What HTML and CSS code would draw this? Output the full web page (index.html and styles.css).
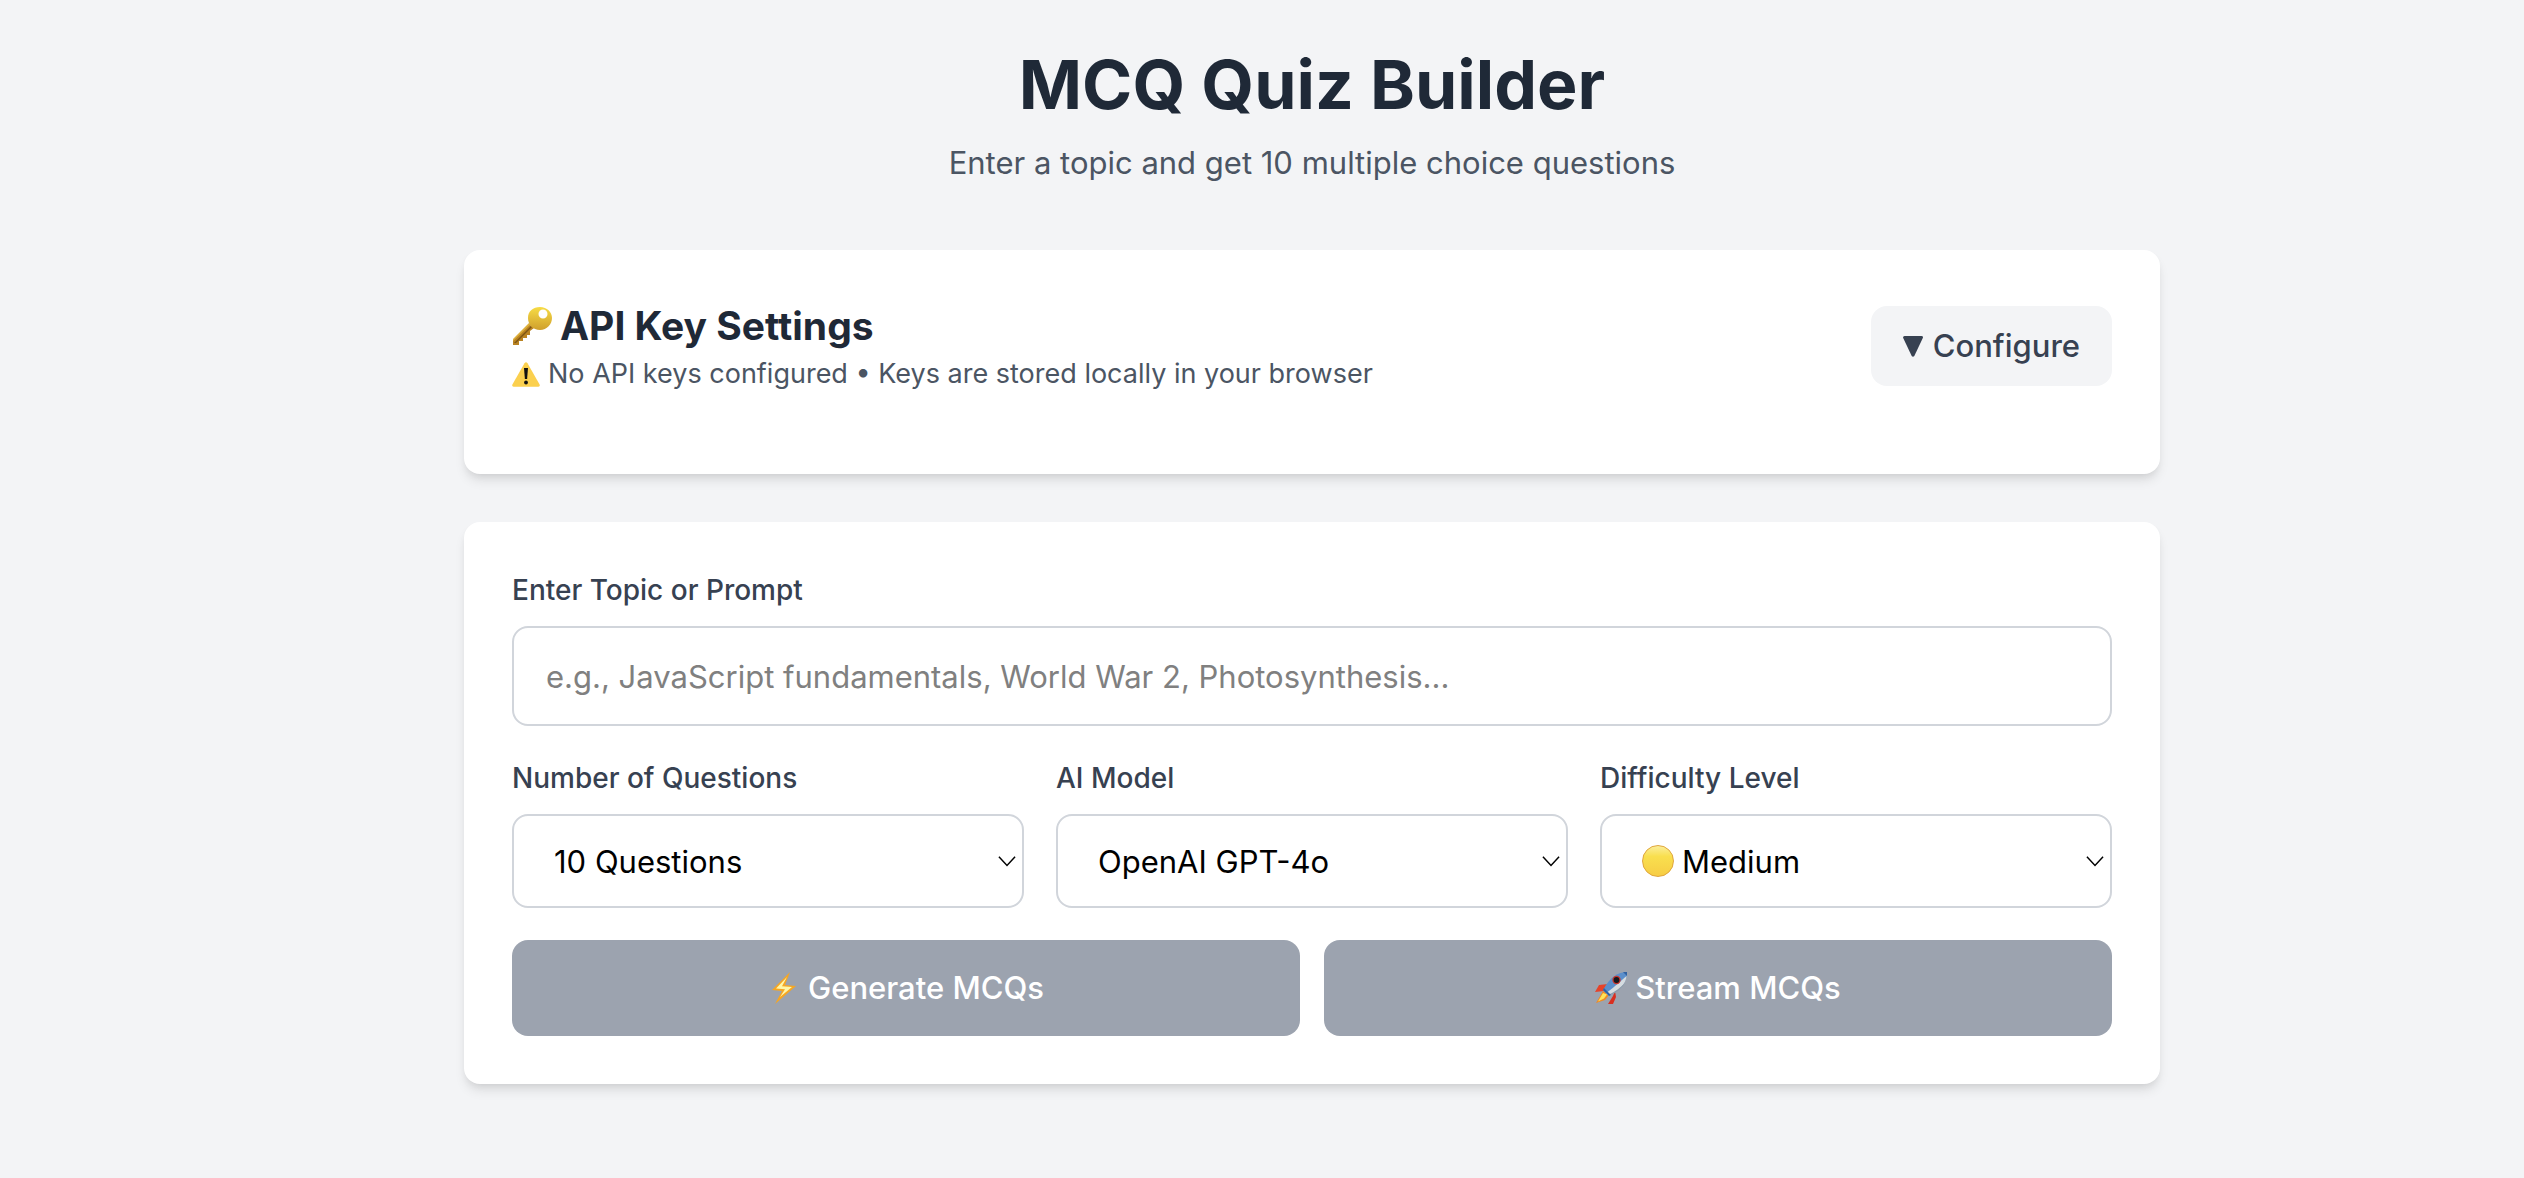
FILE: index.html
```html
<!DOCTYPE html>
<html lang="en">
<head>
    <meta charset="UTF-8">
    <meta name="viewport" content="width=device-width, initial-scale=1.0">
    <title>MCQ Quiz Builder</title>
    <link rel="stylesheet" href="styles.css">
</head>
<body>
    <main class="container">
        <header class="header">
            <h1>MCQ Quiz Builder</h1>
            <p>Enter a topic and get 10 multiple choice questions</p>
        </header>

        <section class="card settings">
            <div>
                <h2>
                    <svg class="icon-key" viewBox="0 0 40 40" aria-hidden="true">
                        <defs>
                            <linearGradient id="gold" x1="0" y1="0" x2="0" y2="1">
                                <stop offset="0" stop-color="#f7dc45"/>
                                <stop offset="1" stop-color="#cf9f2c"/>
                            </linearGradient>
                        </defs>
                        <path fill="#b98322" d="M17 18 1 34v5h6v-4h4v-3h4v-3h3v-4l4-3z"/>
                        <path fill="#dcae3a" d="M17 17 1 33v2l18-17z"/>
                        <path fill="#7d5514" d="M2 37 20 19l1 1L4 37z"/>
                        <path fill="url(#gold)" fill-rule="evenodd" d="M28 1c7 0 12 5 12 11s-5 12-12 12-12-5-12-12S21 1 28 1zm3 2.500a4.500 4.500 0 1 0 0 9 4.500 4.500 0 0 0 0-9z"/>
                    </svg>
                    API Key Settings
                </h2>
                <p>
                    <svg class="icon-warning" viewBox="0 0 28 25" aria-hidden="true">
                        <path fill="#fbd04e" d="M12.500 1.200q1.500-2 3 0L27.600 22.500q.8 2-1.200 2.300H1.600Q-.4 24.500.4 22.500z"/>
                        <path fill="#111" d="M12 6h4l-.9 11h-2.200z"/>
                        <circle cx="14" cy="20.500" r="1.900" fill="#111"/>
                    </svg>
                    No API keys configured • Keys are stored locally in your browser
                </p>
            </div>
            <button type="button" class="btn-configure">
                <svg class="icon-triangle" viewBox="0 0 20 21" aria-hidden="true">
                    <path fill="currentColor" d="M1.500 0h17q2 .2 1.300 2L11.300 20q-1.300 1.500-2.600 0L.2 2Q-.4.200 1.500 0z"/>
                </svg>
                Configure
            </button>
        </section>

        <form class="card" id="quiz-form">
            <label for="topic">Enter Topic or Prompt</label>
            <input type="text" id="topic" name="topic" placeholder="e.g., JavaScript fundamentals, World War 2, Photosynthesis...">

            <div class="options">
                <div>
                    <label for="count">Number of Questions</label>
                    <div class="select-box">
                        <select id="count" name="count">
                            <option value="5">5 Questions</option>
                            <option value="10" selected>10 Questions</option>
                            <option value="20">20 Questions</option>
                        </select>
                        <svg class="chevron" viewBox="0 0 24 15" aria-hidden="true"><path d="M1 1l11 12L23 1"/></svg>
                    </div>
                </div>
                <div>
                    <label for="model">AI Model</label>
                    <div class="select-box">
                        <select id="model" name="model">
                            <option value="gpt-4o">OpenAI GPT-4o</option>
                        </select>
                        <svg class="chevron" viewBox="0 0 24 15" aria-hidden="true"><path d="M1 1l11 12L23 1"/></svg>
                    </div>
                </div>
                <div>
                    <label for="level">Difficulty Level</label>
                    <div class="select-box">
                        <select id="level" name="level" class="with-dot">
                            <option value="easy">Easy</option>
                            <option value="medium" selected>Medium</option>
                            <option value="hard">Hard</option>
                        </select>
                        <span class="dot"></span>
                        <svg class="chevron" viewBox="0 0 24 15" aria-hidden="true"><path d="M1 1l11 12L23 1"/></svg>
                    </div>
                </div>
            </div>

            <div class="actions">
                <button type="submit" disabled>
                    <svg class="icon" viewBox="-4 0 32 32" aria-hidden="true">
                        <path fill="#f6a623" d="M18 0 0 18l10 1L3 32l21-18-11-1z"/>
                        <path fill="#fff7a8" d="M15 5 4 16.500l9 .8L8 25l12-10-10-.8z"/>
                    </svg>
                    Generate MCQs
                </button>
                <button type="button" disabled>
                    <svg class="icon" viewBox="0 0 32 32" aria-hidden="true">
                        <path fill="#e5432a" d="M13 12 4 13 0 20l9-1z"/>
                        <path fill="#d92f20" d="m20 19-2 5-5 8h5l3-7z"/>
                        <path fill="#f08a24" d="M8 19 1 31l9-3 4-5z"/>
                        <path fill="#fde35a" d="M8 21 3 29.500l6-3 3-4z"/>
                        <path fill="#5b8fcb" d="M32 0C23 0 15 5 8 18l6 6C25 19 32 10 32 0z"/>
                        <path fill="#d5dce0" d="M31.500 4C27 8 21 14 11 21l3 3C24 19 31 12 31.500 4z"/>
                        <path fill="#8a9aa8" d="M30 11C26 17 21 21 14 24l-1-1c7-3 12-7 17-12z"/>
                        <path fill="#2f62a3" d="m8 18 6 6 2-1-7-7zM28 0l4 4V0z"/>
                        <circle cx="21.500" cy="8" r="4.200" fill="#c8352c"/>
                        <circle cx="21.500" cy="8" r="2.900" fill="#15181d"/>
                    </svg>
                    Stream MCQs
                </button>
            </div>
        </form>
    </main>
</body>
</html>
```
FILE: styles.css
```css
* {
    box-sizing: border-box;
}
body {
    margin: 0;
    padding: 44px 0 48px 100px;
    background-color: #f3f4f6;
    font-family: Inter, "Liberation Sans", sans-serif;
    font-size: 31px;
    color: #1f2937;
}
h1, h2, p {
    margin: 0;
}
.container {
    max-width: 1696px;
    margin: 0 auto;
}
.header {
    text-align: center;
    margin-bottom: 64px;
}
.header h1 {
    font-size: 68px;
    line-height: 80px;
    margin-bottom: 16px;
}
.header p {
    line-height: 46px;
    color: #4b5563;
}
.card {
    display: block;
    background-color: white;
    border-radius: 16px;
    padding: 48px;
    margin-bottom: 48px;
    box-shadow: 0 8px 12px -2px rgba(0, 0, 0, 0.1), 0 4px 8px -4px rgba(0, 0, 0, 0.1);
}
.settings {
    display: flex;
    justify-content: space-between;
    align-items: center;
    padding-bottom: 80px;
}
.settings h2 {
    display: flex;
    align-items: center;
    gap: 8px;
    font-size: 39px;
    line-height: 56px;
}
.settings p {
    display: flex;
    align-items: center;
    gap: 8px;
    font-size: 27px;
    line-height: 40px;
    color: #4b5563;
}
button {
    display: flex;
    align-items: center;
    justify-content: center;
    border: none;
    border-radius: 16px;
    font-family: inherit;
    font-size: 31px;
    font-weight: 500;
    line-height: 48px;
}
.btn-configure {
    gap: 10px;
    padding: 16px 32px;
    background-color: #f3f4f6;
    color: #374151;
    cursor: pointer;
}
label {
    display: block;
    margin-bottom: 16px;
    font-size: 28px;
    font-weight: 500;
    line-height: 40px;
    color: #374151;
}
input, select {
    display: block;
    width: 100%;
    border: 2px solid #d1d5db;
    border-radius: 16px;
    background-color: white;
    font-family: inherit;
    font-size: 31px;
    color: black;
}
input {
    height: 100px;
    padding: 0 32px;
}
input::placeholder {
    color: #808080;
}
select {
    height: 94px;
    padding: 0 40px;
    appearance: none;
}
.options {
    display: grid;
    grid-template-columns: repeat(3, 1fr);
    gap: 32px;
    margin: 32px 0;
}
.select-box {
    position: relative;
}
.select-box .with-dot {
    padding-left: 80px;
}
.chevron {
    position: absolute;
    right: 8px;
    top: 42px;
    width: 18px;
    height: 11px;
    fill: none;
    stroke: black;
    stroke-width: 2;
    pointer-events: none;
}
.dot {
    position: absolute;
    left: 42px;
    top: 31px;
    width: 32px;
    height: 32px;
    border: 1px solid #e0a63c;
    border-radius: 50%;
    background: linear-gradient(#fbee9a, #f9df4e 35%, #f7cd45);
    pointer-events: none;
}
.actions {
    display: grid;
    grid-template-columns: 1fr 1fr;
    gap: 24px;
}
.actions button {
    gap: 8px;
    padding: 24px;
    background-color: #9ca3af;
    color: white;
}
.icon {
    width: 32px;
    height: 32px;
}
.icon-key {
    width: 40px;
    height: 40px;
}
.icon-warning {
    width: 28px;
    height: 25px;
}
.icon-triangle {
    width: 20px;
    height: 21px;
}
```
